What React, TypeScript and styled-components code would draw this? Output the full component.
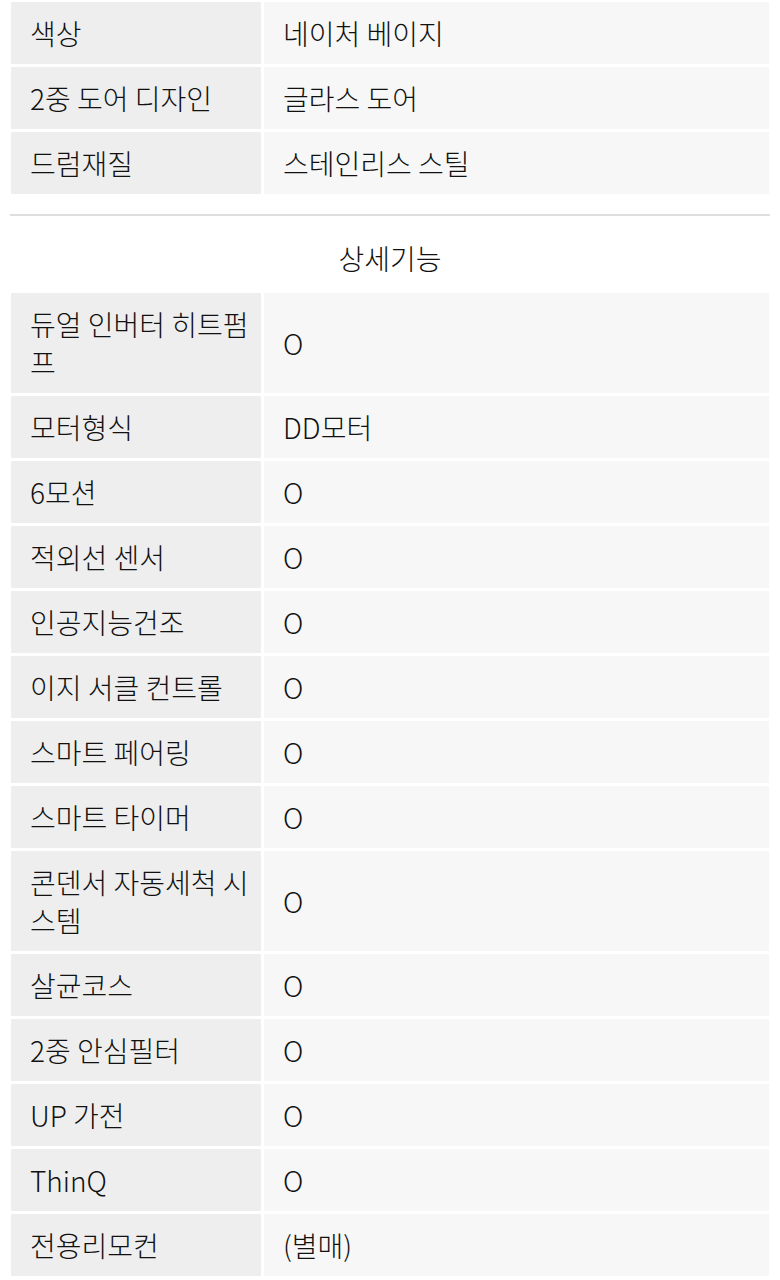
import React from "react";
import styled, { createGlobalStyle } from "styled-components";

const GlobalStyle = createGlobalStyle`
  html, body {
    margin: 0;
    padding: 0;
    background: #ffffff;
  }
  body {
    font-family: "Noto Sans CJK KR", "Noto Sans", sans-serif;
    color: #1a1a1a;
  }
`;

const Page = styled.div`
  width: 780px;
  padding: 0 8px;
  box-sizing: border-box;
  margin-top: -1px;
`;

const SpecTable = styled.table`
  width: 764px;
  border-collapse: separate;
  border-spacing: 3px;
  table-layout: fixed;
`;

const LabelCell = styled.th`
  width: 250px;
  background: #eeeeee;
  padding: 12px 10px 12px 19px;
  box-sizing: border-box;
  text-align: left;
  vertical-align: middle;
  font-weight: 300;
  font-size: 28px;
  line-height: 38px;
  color: #111111;
  word-break: break-all;
`;

const ValueCell = styled.td`
  background: #f7f7f7;
  padding: 12px 19px;
  box-sizing: border-box;
  vertical-align: middle;
  font-weight: 300;
  font-size: 28px;
  line-height: 38px;
  color: #111111;
`;

const Divider = styled.hr`
  margin: 17px 2px 0;
  border: 0;
  height: 2px;
  background: #dedede;
`;

const SectionTitle = styled.h2`
  margin: 0;
  padding: 23px 0 13px;
  text-align: center;
  font-weight: 300;
  font-size: 28px;
  line-height: 38px;
  color: #111111;
`;

type Spec = [string, string];

const basics: Spec[] = [
  ["색상", "네이처 베이지"],
  ["2중 도어 디자인", "글라스 도어"],
  ["드럼재질", "스테인리스 스틸"],
];

const features: Spec[] = [
  ["듀얼 인버터 히트펌프", "O"],
  ["모터형식", "DD모터"],
  ["6모션", "O"],
  ["적외선 센서", "O"],
  ["인공지능건조", "O"],
  ["이지 서클 컨트롤", "O"],
  ["스마트 페어링", "O"],
  ["스마트 타이머", "O"],
  ["콘덴서 자동세척 시스템", "O"],
  ["살균코스", "O"],
  ["2중 안심필터", "O"],
  ["UP 가전", "O"],
  ["ThinQ", "O"],
  ["전용리모컨", "(별매)"],
];

function Specs({ rows }: { rows: Spec[] }) {
  return (
    <SpecTable>
      <tbody>
        {rows.map(([label, value]) => (
          <tr key={label}>
            <LabelCell scope="row">{label}</LabelCell>
            <ValueCell>{value}</ValueCell>
          </tr>
        ))}
      </tbody>
    </SpecTable>
  );
}

export default function App() {
  return (
    <>
      <GlobalStyle />
      <Page>
        <Specs rows={basics} />
        <Divider />
        <SectionTitle>상세기능</SectionTitle>
        <Specs rows={features} />
      </Page>
    </>
  );
}
